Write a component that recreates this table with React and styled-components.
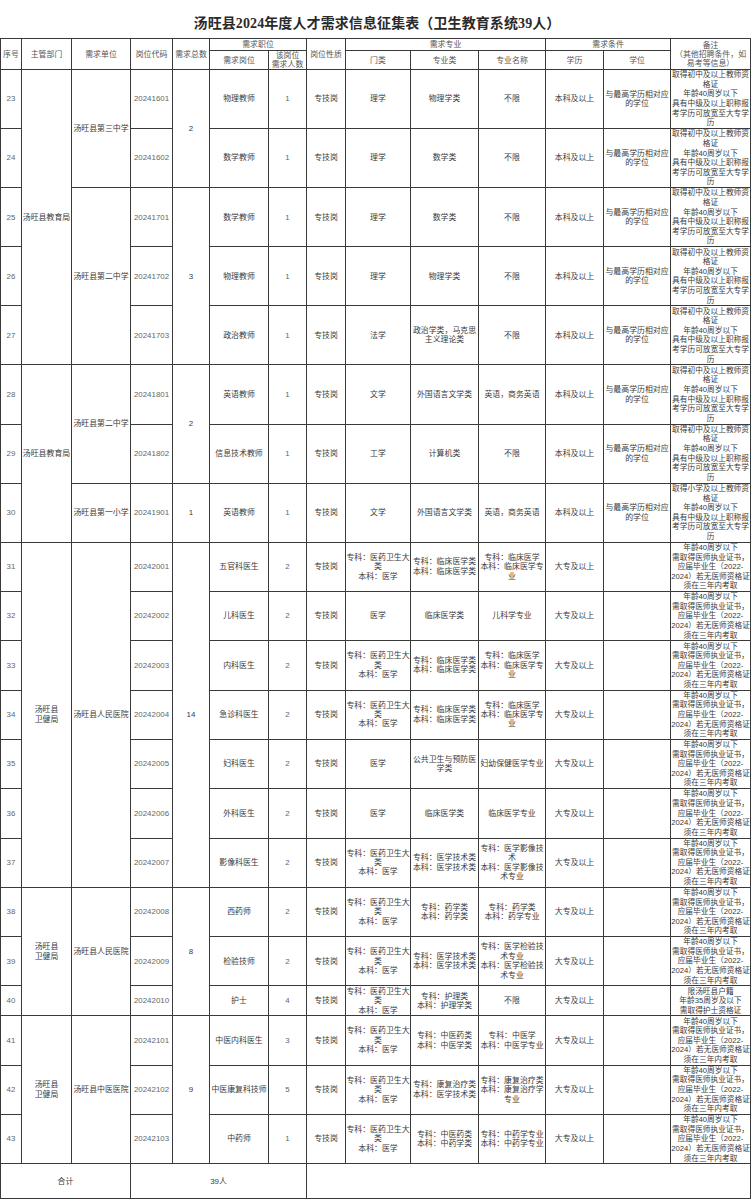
import React from "react";
import styled, { createGlobalStyle } from "styled-components";

const GlobalStyle = createGlobalStyle`
  html, body {
    margin: 0;
    padding: 0;
    background: #ffffff;
  }
  body {
    font-family: "Liberation Sans", "Noto Sans CJK SC", sans-serif;
    color: #333;
  }
`;

const teacherNote = (stage) => [
  `取得${stage}及以上教师资`,
  "格证",
  "年龄40周岁以下",
  "具有中级及以上职称报",
  "考学历可放宽至大专学",
  "历",
];

const medNote = [
  "年龄40周岁以下",
  "需取得医师执业证书，",
  "应届毕业生（2022-",
  "2024）若无医师资格证",
  "须在三年内考取",
];

const nurseNote = ["限汤旺县户籍", "年龄35周岁及以下", "需取得护士资格证"];

const DEGREE = "与最高学历相对应的学位";
const MED_CAT = "专科：医药卫生大类\n本科：医学";

const teacher = (o) => ({
  num: 1,
  kind: "专技岗",
  major: "不限",
  edu: "本科及以上",
  degree: DEGREE,
  note: teacherNote("初中"),
  h: 59.1,
  ...o,
});

const doctor = (o) => ({
  num: 2,
  kind: "专技岗",
  cat: MED_CAT,
  edu: "大专及以上",
  degree: "",
  note: medNote,
  h: 49.3,
  ...o,
});

const rows = [
  teacher({ no: 23, dept: ["汤旺县教育局", 5], unit: ["汤旺县第三中学", 2], total: ["2", 2], code: "20241601", post: "物理教师", cat: "理学", cls: "物理学类" }),
  teacher({ no: 24, code: "20241602", post: "数学教师", cat: "理学", cls: "数学类" }),
  teacher({ no: 25, unit: ["汤旺县第二中学", 3], total: ["3", 3], code: "20241701", post: "数学教师", cat: "理学", cls: "数学类" }),
  teacher({ no: 26, code: "20241702", post: "物理教师", cat: "理学", cls: "物理学类" }),
  teacher({ no: 27, code: "20241703", post: "政治教师", cat: "法学", cls: "政治学类，马克思主义理论类" }),
  teacher({ no: 28, dept: ["汤旺县教育局", 3], unit: ["汤旺县第二中学", 2], total: ["2", 2], code: "20241801", post: "英语教师", cat: "文学", cls: "外国语言文学类", major: "英语，商务英语" }),
  teacher({ no: 29, code: "20241802", post: "信息技术教师", cat: "工学", cls: "计算机类" }),
  teacher({ no: 30, unit: ["汤旺县第一小学", 1], total: ["1", 1], code: "20241901", post: "英语教师", cat: "文学", cls: "外国语言文学类", major: "英语，商务英语", note: teacherNote("小学") }),
  doctor({ no: 31, dept: ["汤旺县\n卫健局", 7], unit: ["汤旺县人民医院", 7], total: ["14", 7], code: "20242001", post: "五官科医生", cls: "专科：临床医学类\n本科：临床医学类", major: "专科：临床医学\n本科：临床医学专业" }),
  doctor({ no: 32, code: "20242002", post: "儿科医生", cat: "医学", cls: "临床医学类", major: "儿科学专业" }),
  doctor({ no: 33, code: "20242003", post: "内科医生", cls: "专科：临床医学类\n本科：临床医学类", major: "专科：临床医学\n本科：临床医学专业" }),
  doctor({ no: 34, code: "20242004", post: "急诊科医生", cls: "专科：临床医学类\n本科：临床医学类", major: "专科：临床医学\n本科：临床医学专业" }),
  doctor({ no: 35, code: "20242005", post: "妇科医生", cat: "医学", cls: "公共卫生与预防医学类", major: "妇幼保健医学专业" }),
  doctor({ no: 36, code: "20242006", post: "外科医生", cat: "医学", cls: "临床医学类", major: "临床医学专业" }),
  doctor({ no: 37, code: "20242007", post: "影像科医生", cls: "专科：医学技术类\n本科：医学技术类", major: "专科：医学影像技术\n本科：医学影像技术专业" }),
  doctor({ no: 38, dept: ["汤旺县\n卫健局", 3], unit: ["汤旺县人民医院", 3], total: ["8", 3], code: "20242008", post: "西药师", cls: "专科：药学类\n本科：药学类", major: "专科：药学类\n本科：药学专业" }),
  doctor({ no: 39, code: "20242009", post: "检验技师", cls: "专科：医学技术类\n本科：医学技术类", major: "专科：医学检验技术专业\n本科：医学检验技术专业" }),
  doctor({ no: 40, code: "20242010", post: "护士", num: 4, cls: "专科：护理类\n本科：护理学类", major: "不限", note: nurseNote, h: 30 }),
  doctor({ no: 41, dept: ["汤旺县\n卫健局", 3], unit: ["汤旺县中医医院", 3], total: ["9", 3], code: "20242101", post: "中医内科医生", num: 3, cls: "专科：中医药类\n本科：中医学类", major: "专科：中医学\n本科：中医学专业" }),
  doctor({ no: 42, code: "20242102", post: "中医康复科技师", num: 5, cls: "专科：康复治疗类\n本科：医学技术类", major: "专科：康复治疗类\n本科：康复治疗学专业" }),
  doctor({ no: 43, code: "20242103", post: "中药师", num: 1, cls: "专科：中医药类\n本科：中药学类", major: "专科：中药学专业\n本科：中药学专业" }),
];

const widths = [21, 50, 59, 42, 37, 59, 38, 39, 65, 68, 67, 58, 67, 80];

const Page = styled.div`
  width: 754px;
  overflow: hidden;
`;

const Title = styled.h1`
  margin: 0;
  height: 38px;
  padding-top: 5px;
  box-sizing: border-box;
  display: flex;
  align-items: center;
  justify-content: center;
  font-family: "Liberation Serif", "Noto Sans CJK SC", serif;
  font-size: 14px;
  font-weight: 700;
  color: #2a2a2a;
  letter-spacing: 0.1px;
`;

const Table = styled.table`
  width: 750px;
  table-layout: fixed;
  border-collapse: collapse;
  font-size: 7.9px;
  line-height: 9.4px;
`;

const Row = styled.tr`
  height: ${(p) => p.$h}px;
`;

const Head = styled.th`
  border: 1px solid #3a3a3a;
  padding: 0;
  font-weight: 400;
  color: #555;
  text-align: center;
  vertical-align: middle;
  white-space: pre-line;
  line-height: 9px;
`;

const Cell = styled.td`
  border: 1px solid #3a3a3a;
  padding: 0;
  text-align: center;
  vertical-align: middle;
  white-space: pre-line;
  color: ${(p) => (p.$muted ? "#666" : "#3a3a3a")};
  overflow: visible;
`;

const NoteLine = styled.span`
  display: block;
  white-space: nowrap;
  font-size: 7.7px;
  line-height: 9.6px;
`;

export default function App() {
  return (
    <Page>
      <GlobalStyle />
      <Title>汤旺县2024年度人才需求信息征集表（卫生教育系统39人）</Title>
      <Table>
        <colgroup>
          {widths.map((w, i) => (
            <col key={i} style={{ width: w }} />
          ))}
        </colgroup>
        <thead>
          <Row $h={12}>
            <Head rowSpan={2}>序号</Head>
            <Head rowSpan={2}>主管部门</Head>
            <Head rowSpan={2}>需求单位</Head>
            <Head rowSpan={2}>岗位代码</Head>
            <Head rowSpan={2}>需求总数</Head>
            <Head colSpan={2}>需求职位</Head>
            <Head rowSpan={2}>岗位性质</Head>
            <Head colSpan={3}>需求专业</Head>
            <Head colSpan={2}>需求条件</Head>
            <Head rowSpan={2}>{"备注\n（其他招聘条件，如\n易考等信息）"}</Head>
          </Row>
          <Row $h={19}>
            <Head>需求岗位</Head>
            <Head>{"该岗位\n需求人数"}</Head>
            <Head>门类</Head>
            <Head>专业类</Head>
            <Head>专业名称</Head>
            <Head>学历</Head>
            <Head>学位</Head>
          </Row>
        </thead>
        <tbody>
          {rows.map((r) => (
            <Row key={r.no} $h={r.h}>
              <Cell $muted>{r.no}</Cell>
              {r.dept && <Cell rowSpan={r.dept[1]}>{r.dept[0]}</Cell>}
              {r.unit && <Cell rowSpan={r.unit[1]}>{r.unit[0]}</Cell>}
              <Cell $muted>{r.code}</Cell>
              {r.total && <Cell rowSpan={r.total[1]}>{r.total[0]}</Cell>}
              <Cell>{r.post}</Cell>
              <Cell $muted>{r.num}</Cell>
              <Cell>{r.kind}</Cell>
              <Cell>{r.cat}</Cell>
              <Cell>{r.cls}</Cell>
              <Cell>{r.major}</Cell>
              <Cell>{r.edu}</Cell>
              <Cell>{r.degree}</Cell>
              <Cell>
                {r.note.map((l, i) => (
                  <NoteLine key={i}>{l}</NoteLine>
                ))}
              </Cell>
            </Row>
          ))}
          <Row $h={35}>
            <Cell colSpan={3}>合计</Cell>
            <Cell colSpan={4}>39人</Cell>
            <Cell colSpan={7} />
          </Row>
        </tbody>
      </Table>
    </Page>
  );
}
